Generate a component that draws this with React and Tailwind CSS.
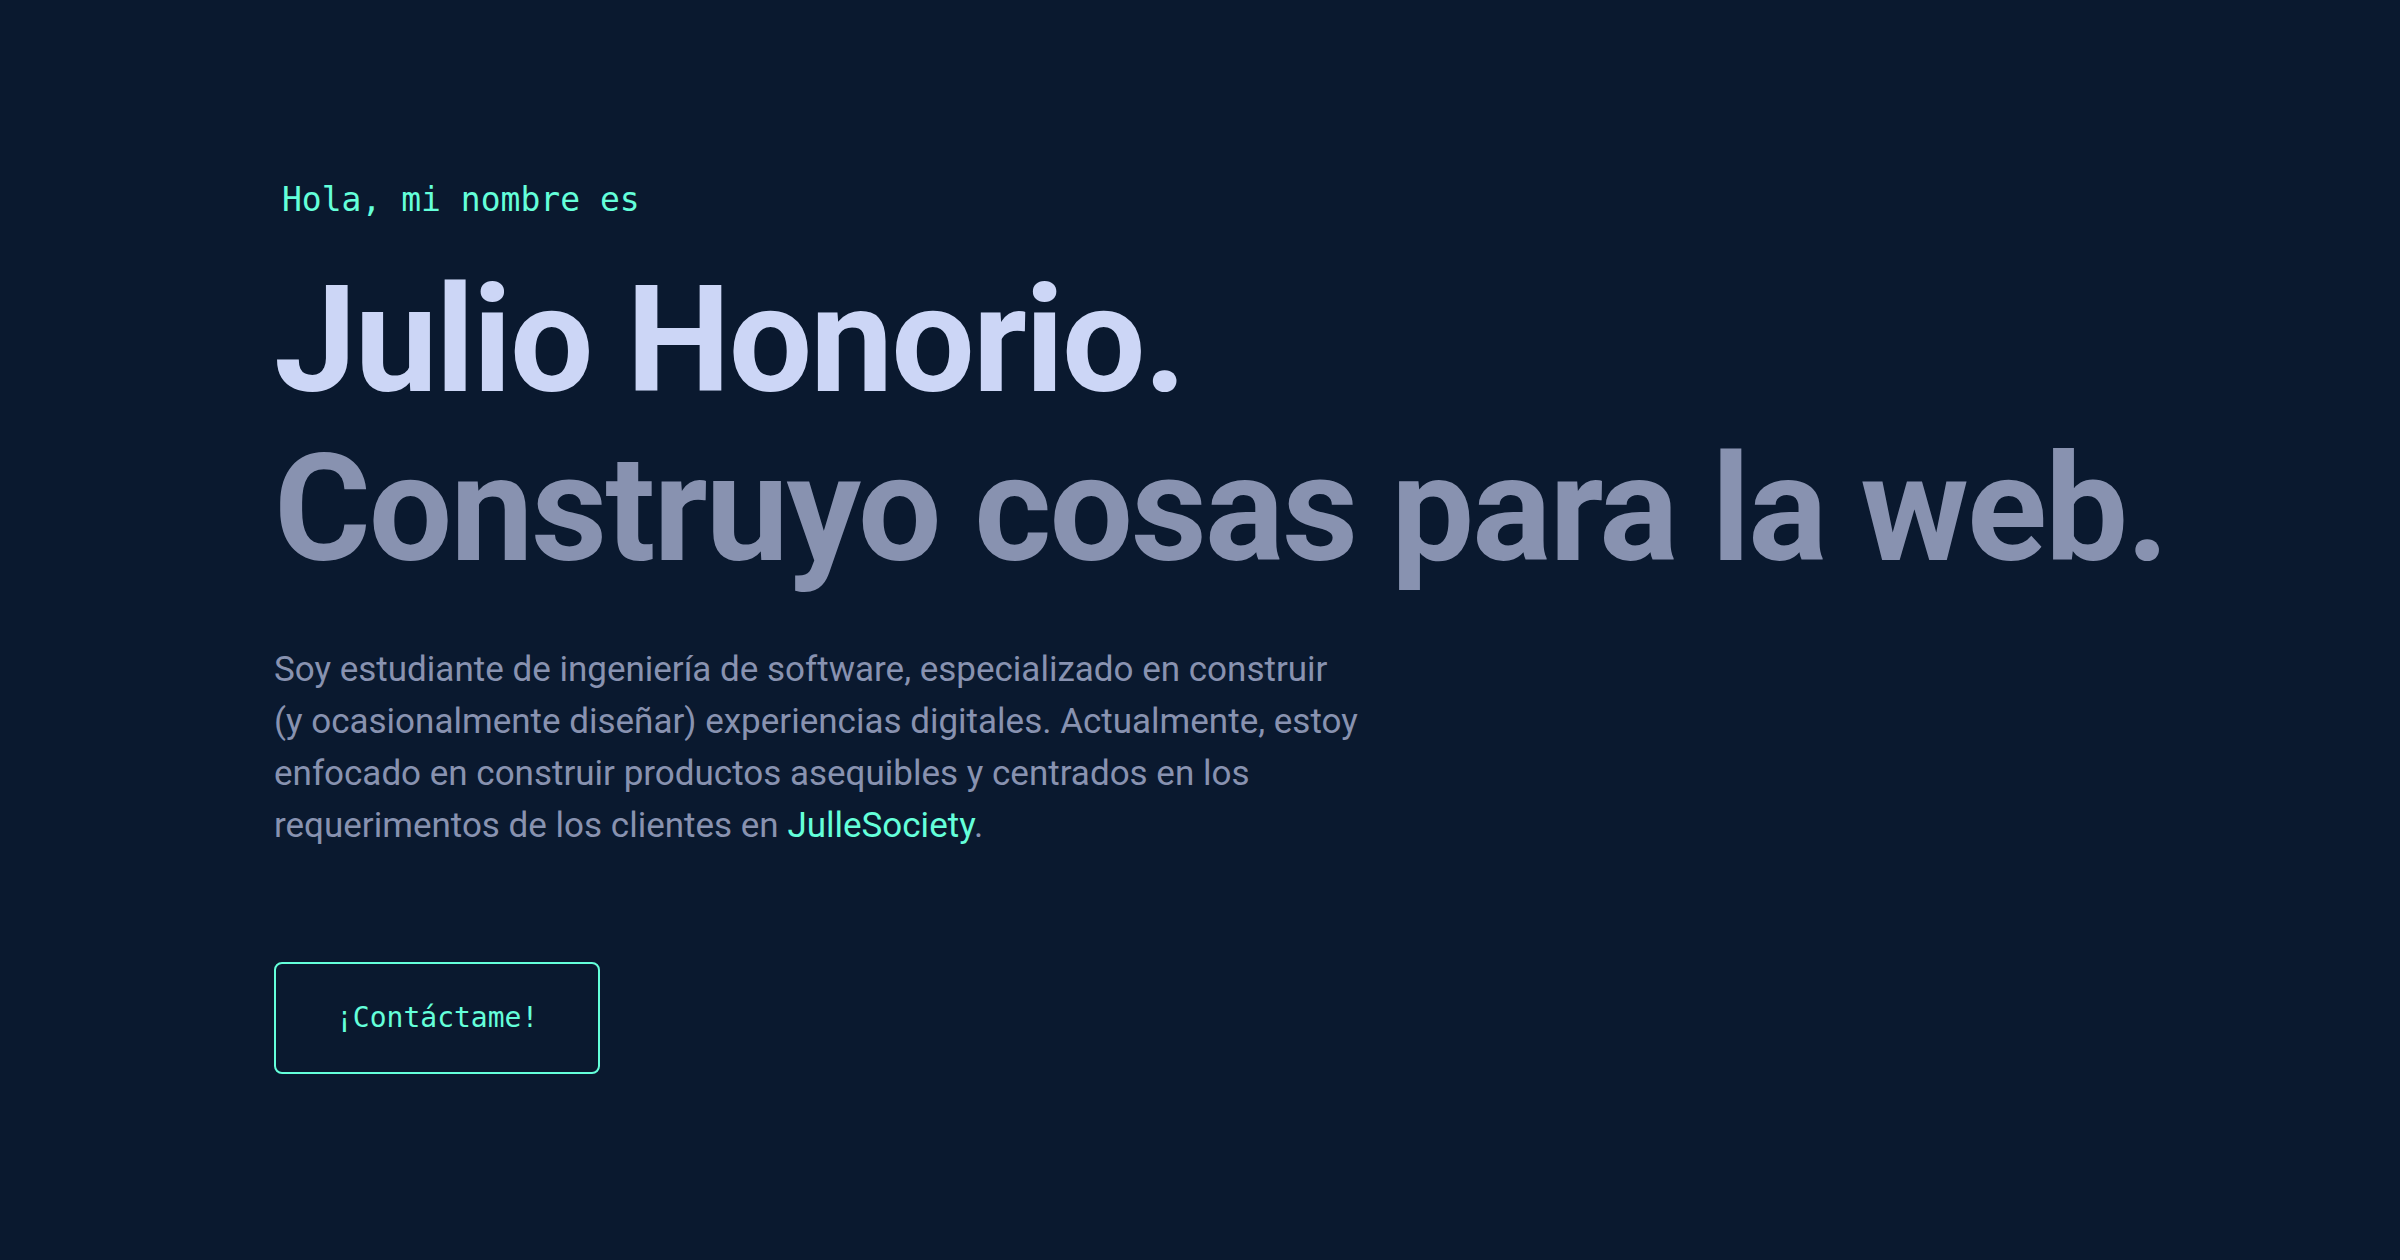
import React from 'react';

const mono = "font-['DejaVu_Sans_Mono','Liberation_Mono',monospace]";
const sans = "font-['Roboto','Inter',sans-serif]";

function App() {
  return (
    <main className="min-h-screen bg-[#0a192f]">
      {/* Hero */}
      <section className="h-screen flex flex-col justify-center items-start pl-[274px] pr-[100px]">
        <h1 className={`${mono} text-[33px] leading-none text-[#64ffda] ml-2 -mt-1`}>
          Hola, mi nombre es
        </h1>
        <h2 className={`${sans} mt-[51px] text-[148px] leading-none font-bold tracking-[-2px] whitespace-nowrap text-[#ccd6f6]`}>
          Julio Honorio.
        </h2>
        <h3 className={`${sans} mt-[21px] text-[148px] leading-none font-bold tracking-[-2px] whitespace-nowrap text-[#8892b0]`}>
          Construyo cosas para la web.
        </h3>
        <p className={`${sans} mt-[60px] max-w-[1140px] text-[35px] leading-[52px] text-[#8892b0]`}>
          Soy estudiante de ingeniería de software, especializado en construir<br />
          (y ocasionalmente diseñar) experiencias digitales. Actualmente, estoy<br />
          enfocado en construir productos asequibles y centrados en los<br />
          requerimentos de los clientes en <a href="#" className="text-[#64ffda]">JulleSociety</a>.
        </p>
        <a
          href="#contact"
          className={`${mono} mt-[110px] inline-block border-2 border-[#64ffda] rounded-lg px-[60px] py-10 text-[28px] leading-none text-[#64ffda]`}
        >
          ¡Contáctame!
        </a>
      </section>
    </main>
  );
}

export default App;
